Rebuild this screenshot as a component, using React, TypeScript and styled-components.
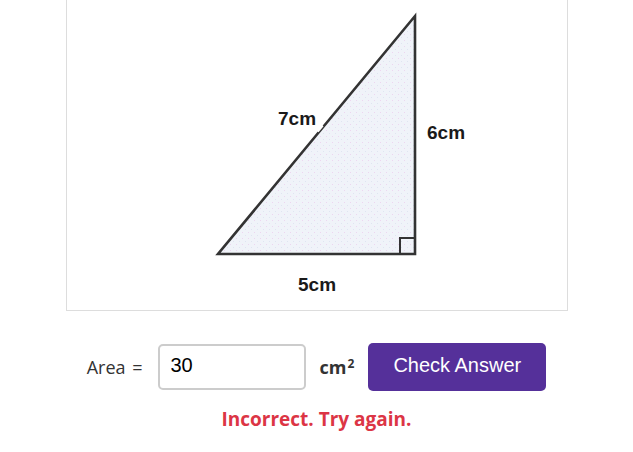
import * as React from "react";
import styled, { createGlobalStyle } from "styled-components";

const GlobalStyle = createGlobalStyle`
  html, body {
    margin: 0;
    padding: 0;
    background: #ffffff;
    overflow: hidden;
  }
  body {
    font-family: "Open Sans", "Noto Sans", sans-serif;
    color: #333333;
  }
`;

const Page = styled.div`
  width: 633px;
  height: 452px;
  display: flex;
  flex-direction: column;
  align-items: center;
`;

const FigureCard = styled.div`
  margin-top: -10px;
  width: 500px;
  border: 1px solid #dddddd;
  background: #ffffff;
`;

const Figure = styled.svg`
  display: block;
  width: 500px;
  height: 319px;
`;

const AnswerRow = styled.div`
  margin-top: 32px;
  display: flex;
  align-items: center;
  gap: 14px;
`;

const Label = styled.span`
  font-family: "Open Sans", "Noto Sans", sans-serif;
  font-size: 18px;
  color: #333333;
  word-spacing: 2px;
  margin-right: 1px;
`;

const AnswerInput = styled.input`
  box-sizing: border-box;
  width: 148px;
  height: 46px;
  border: 2px solid #cccccc;
  border-radius: 5px;
  padding: 0 11px 4px;
  font-family: "Liberation Sans", Arial, sans-serif;
  font-size: 20px;
  color: #000000;
  outline: none;
`;

const Unit = styled.span`
  font-family: "Open Sans", "Noto Sans", sans-serif;
  font-weight: 700;
  font-size: 18px;
  color: #333333;
  sup {
    font-size: 12px;
    vertical-align: 6px;
    margin-left: 1px;
  }
`;

const CheckButton = styled.button`
  box-sizing: border-box;
  height: 48px;
  width: 178px;
  border: none;
  border-radius: 5px;
  background: #55309a;
  color: #ffffff;
  font-family: "Liberation Sans", Arial, sans-serif;
  font-size: 20px;
  padding: 0 0 4px;
  cursor: pointer;
`;

const Feedback = styled.div`
  margin-top: 15px;
  font-family: "Open Sans", "Noto Sans", sans-serif;
  font-weight: 700;
  font-size: 19px;
  color: #dc3545;
`;

const SideLabel = styled.text`
  font-family: "Liberation Sans", Arial, sans-serif;
  font-weight: 700;
  font-size: 19px;
  fill: #1a1a1a;
`;

function TriangleFigure() {
  return (
    <Figure viewBox="0 0 500 319">
      <defs>
        <pattern id="dots" width="6" height="6" patternUnits="userSpaceOnUse">
          <rect width="6" height="6" fill="#f0f3f9" />
          <rect x="1" y="1" width="1" height="1" fill="#ecd6f0" />
          <rect x="4" y="4" width="1" height="1" fill="#dfe5f1" />
        </pattern>
      </defs>
      <polygon
        points="151,263 348,263 348,25"
        fill="url(#dots)"
        stroke="#333333"
        strokeWidth="2.6"
        strokeLinejoin="miter"
      />
      <rect x="333" y="247" width="15" height="16" fill="none" stroke="#333333" strokeWidth="2" />
      <line x1="250" y1="140" x2="255" y2="134" stroke="#ffffff" strokeWidth="4" />
      <SideLabel x="211" y="134">7cm</SideLabel>
      <SideLabel x="360" y="148">6cm</SideLabel>
      <SideLabel x="231" y="300">5cm</SideLabel>
    </Figure>
  );
}

export default function App() {
  const [value, setValue] = React.useState("30");
  return (
    <Page>
      <GlobalStyle />
      <FigureCard>
        <TriangleFigure />
      </FigureCard>
      <AnswerRow>
        <Label>Area =</Label>
        <AnswerInput value={value} onChange={(e) => setValue(e.target.value)} />
        <Unit>
          cm<sup>2</sup>
        </Unit>
        <CheckButton>Check Answer</CheckButton>
      </AnswerRow>
      <Feedback>Incorrect. Try again.</Feedback>
    </Page>
  );
}
